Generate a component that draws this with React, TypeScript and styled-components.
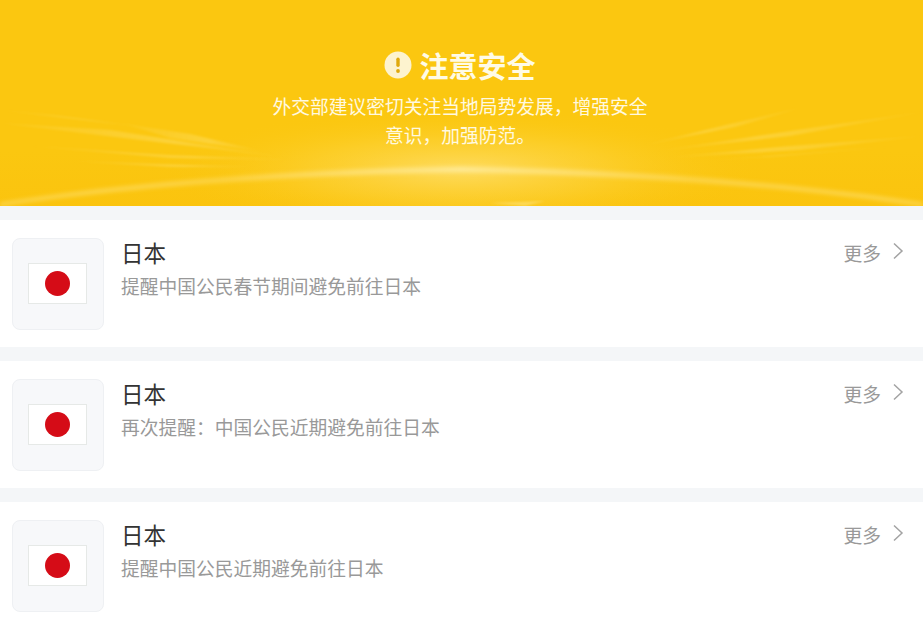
import React from "react";
import styled, { createGlobalStyle } from "styled-components";

const Global = createGlobalStyle`
  html, body { margin: 0; padding: 0; background: #f4f6f8; }
  body { font-family: "Noto Sans CJK SC", "Liberation Sans", sans-serif; }
  * { box-sizing: border-box; }
`;

const Page = styled.div`
  width: 923px;
  height: 629px;
  overflow: hidden;
  display: flex;
  flex-direction: column;
  gap: 14px;
`;

const Hero = styled.header`
  position: relative;
  height: 206px;
  flex: none;
  background: #fbc710;
  overflow: hidden;
  display: flex;
  flex-direction: column;
  align-items: center;
  padding-top: 44px;
  color: #fff;
`;

const HeroArt = styled.svg`
  position: absolute;
  inset: 0;
  width: 100%;
  height: 100%;
`;

const HeroTitle = styled.h1`
  position: relative;
  margin: 0 3px 6px 0;
  display: flex;
  align-items: center;
  gap: 7px;
  height: 42px;
  font-size: 29px;
  line-height: 42px;
  font-weight: 700;
  color: #fffbe6;
`;

const HeroText = styled.p`
  position: relative;
  width: 380px;
  margin: 0 3px 0 0;
  font-size: 18.75px;
  line-height: 28.5px;
  font-weight: 400;
  text-align: center;
  color: #fff9e0;
`;

const Card = styled.section`
  flex: none;
  height: 127px;
  background: #fff;
  display: flex;
  align-items: flex-start;
  padding: 18px 19px 0 12px;
`;

const Thumb = styled.div`
  width: 92px;
  height: 92px;
  flex: none;
  border: 1px solid #eef0f3;
  border-radius: 8px;
  background: #f7f8fa;
  padding: 0 2px 2px 0;
  display: flex;
  align-items: center;
  justify-content: center;
`;

const Flag = styled.div`
  width: 59px;
  height: 41px;
  background: #fff;
  border: 1px solid #e6e9e7;
  display: flex;
  align-items: center;
  justify-content: center;
`;

const Sun = styled.span`
  width: 25px;
  height: 25px;
  border-radius: 50%;
  background: #d50c17;
`;

const Body = styled.div`
  flex: 1;
  min-width: 0;
  margin-left: 17px;
`;

const CardTitle = styled.h2`
  margin: 0;
  height: 28px;
  font-size: 22.5px;
  line-height: 28px;
  font-weight: 400;
  color: #333;
`;

const CardText = styled.p`
  margin: 6px 0 0;
  font-size: 18.75px;
  line-height: 28px;
  font-weight: 400;
  color: #999;
`;

const More = styled.a`
  flex: none;
  display: flex;
  align-items: center;
  gap: 11px;
  height: 28px;
  font-size: 18.75px;
  color: #999;
`;

const Chevron = styled.svg`
  margin-top: -3px;
`;

const items = [
  "提醒中国公民春节期间避免前往日本",
  "再次提醒：中国公民近期避免前往日本",
  "提醒中国公民近期避免前往日本",
];

export default function App() {
  return (
    <Page>
      <Global />
      <Hero>
        <HeroArt viewBox="0 0 923 206" preserveAspectRatio="none" aria-hidden="true">
          <defs>
            <radialGradient id="glow">
              <stop offset="0" stopColor="#ffe27a" stopOpacity="0.75" />
              <stop offset="0.5" stopColor="#fed94f" stopOpacity="0.38" />
              <stop offset="1" stopColor="#fbc710" stopOpacity="0" />
            </radialGradient>
            <linearGradient id="edge" x1="0" x2="0" y1="0" y2="1">
              <stop offset="0" stopColor="#fabf0c" stopOpacity="0" />
              <stop offset="1" stopColor="#fabf0c" stopOpacity="0.4" />
            </linearGradient>
            <linearGradient id="arc" x1="0" x2="1" y1="0" y2="0">
              <stop offset="0" stopColor="#ffe98f" stopOpacity="0.6" />
              <stop offset="0.25" stopColor="#ffe27a" stopOpacity="0.5" />
              <stop offset="0.5" stopColor="#ffeea6" stopOpacity="0.8" />
              <stop offset="0.75" stopColor="#ffe27a" stopOpacity="0.5" />
              <stop offset="1" stopColor="#ffe98f" stopOpacity="0.6" />
            </linearGradient>
            <linearGradient id="rayL" x1="0" x2="1" y1="0" y2="0">
              <stop offset="0" stopColor="#ffe680" stopOpacity="0.08" />
              <stop offset="0.6" stopColor="#ffe680" stopOpacity="0.36" />
              <stop offset="1" stopColor="#ffe680" stopOpacity="0" />
            </linearGradient>
            <linearGradient id="rayR" x1="1" x2="0" y1="0" y2="0">
              <stop offset="0" stopColor="#ffe680" stopOpacity="0.08" />
              <stop offset="0.6" stopColor="#ffe680" stopOpacity="0.34" />
              <stop offset="1" stopColor="#ffe680" stopOpacity="0" />
            </linearGradient>
            <filter id="soft"><feGaussianBlur stdDeviation="0.8" /></filter>
            <filter id="softer"><feGaussianBlur stdDeviation="2" /></filter>
          </defs>
          <rect x="0" y="150" width="923" height="56" fill="url(#edge)" />
          <ellipse cx="461" cy="170" rx="300" ry="62" fill="url(#glow)" />
          <g filter="url(#soft)" fill="url(#rayL)">
            <path d="M0 123 L110 130 L290 158 L90 134 Z" />
            <path d="M125 124 L190 134 L265 152 L170 138 Z" />
            <path d="M30 146 L170 155 L300 160 L170 158 Z" />
            <path d="M70 161 L190 165 L260 167 L170 167 Z" />
            <path d="M0 110 L60 116 L150 128 Z" />
          </g>
          <g filter="url(#soft)" fill="url(#rayR)">
            <path d="M800 108 L730 124 L640 146 L735 127 Z" />
            <path d="M923 112 L810 128 L650 152 L790 136 Z" />
            <path d="M923 136 L790 146 L660 158 L800 150 Z" />
            <path d="M900 146 L780 156 L690 162 Z" />
          </g>
          <path
            d="M0 206 C110 189 280 175 461 172 C640 175 810 189 923 206 L923 203 C810 185 640 169 461 167 C280 169 110 185 0 203 Z"
            fill="url(#arc)"
            filter="url(#softer)"
          />
          <path d="M490 203 L545 201 L525 206 Z" fill="#ffe98f" opacity="0.5" filter="url(#soft)" />
        </HeroArt>
        <HeroTitle>
          <svg width="28" height="28" viewBox="0 0 28 28" aria-hidden="true">
            <circle cx="14" cy="14" r="13.5" fill="#fdf3cf" />
            <rect x="12.3" y="6.5" width="3.4" height="9.5" rx="1.7" fill="#e0a90c" />
            <circle cx="14" cy="20" r="1.9" fill="#e0a90c" />
          </svg>
          注意安全
        </HeroTitle>
        <HeroText>外交部建议密切关注当地局势发展，增强安全意识，加强防范。</HeroText>
      </Hero>
      {items.map((text) => (
        <Card key={text}>
          <Thumb>
            <Flag>
              <Sun />
            </Flag>
          </Thumb>
          <Body>
            <CardTitle>日本</CardTitle>
            <CardText>{text}</CardText>
          </Body>
          <More>
            更多
            <Chevron width="12" height="18" viewBox="0 0 12 18" fill="none" aria-hidden="true">
              <path d="M2 1.5 L10 9 L2 16.5" stroke="#a3a3a3" strokeWidth="1.5" />
            </Chevron>
          </More>
        </Card>
      ))}
    </Page>
  );
}
